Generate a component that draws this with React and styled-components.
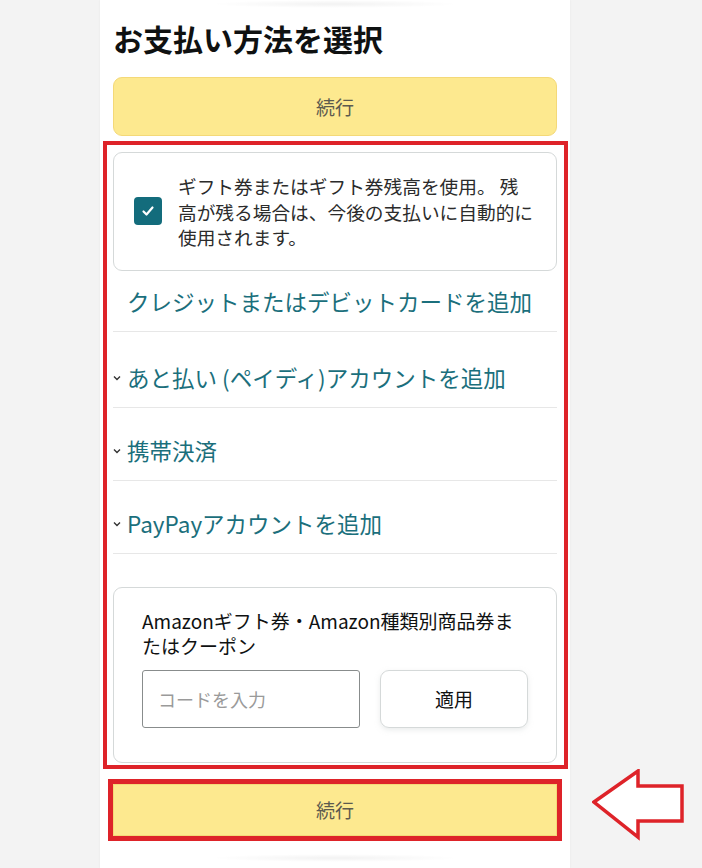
import React from 'react';
import styled, { createGlobalStyle } from 'styled-components';

const GlobalStyle = createGlobalStyle`
  body {
    margin: 0;
    background: #f3f3f3;
    font-family: "Noto Sans CJK JP", "Noto Sans", sans-serif;
    color: #0f1111;
  }
`;

const options = [
    { label: 'クレジットまたはデビットカードを追加', chevron: false, top: 17 },
    { label: 'あと払い (ペイディ)アカウントを追加', chevron: true, top: 32 },
    { label: '携帯決済', chevron: true, top: 29 },
    { label: 'PayPayアカウントを追加', chevron: true, top: 29 },
];

function Chevron() {
    return (
        <ChevronBox width="8" height="6" viewBox="0 0 8 6">
            <path d="M1 1.5 L4 4.5 L7 1.5" fill="none" stroke="#333" strokeWidth="1.4" />
        </ChevronBox>
    );
}

function Arrow() {
    return (
        <ArrowBox width="96" height="72" viewBox="0 0 96 72">
            <path
                d="M2 33 L46 2 L46 17 L90 17 L90 52 L46 52 L46 68 Z"
                fill="#fff"
                stroke="#de2329"
                strokeWidth="3.5"
                strokeLinejoin="miter"
            />
        </ArrowBox>
    );
}

function App() {
    return (
        <>
            <GlobalStyle />
            <Column>
                <Fade />
                <Title>お支払い方法を選択</Title>
                <ContinueButton>続行</ContinueButton>

                <Section>
                    <CheckCard>
                        <CheckBox>
                            <svg width="16" height="16" viewBox="0 0 16 16">
                                <path d="M3.5 8.5 L6.5 11.5 L12.5 4.5" fill="none" stroke="#fff" strokeWidth="2.2" strokeLinecap="round" strokeLinejoin="round" />
                            </svg>
                        </CheckBox>
                        <CheckText>
                            ギフト券またはギフト券残高を使用。 残<br />
                            高が残る場合は、今後の支払いに自動的に<br />
                            使用されます。
                        </CheckText>
                    </CheckCard>

                    {options.map((option, index) => (
                        <OptionRow key={index} $top={option.top}>
                            <ChevronSlot>{option.chevron && <Chevron />}</ChevronSlot>
                            <OptionLabel>{option.label}</OptionLabel>
                        </OptionRow>
                    ))}

                    <GiftCard>
                        <GiftText>
                            Amazonギフト券・Amazon種類別商品券ま<br />
                            たはクーポン
                        </GiftText>
                        <CodeRow>
                            <CodeInput placeholder="コードを入力" />
                            <ApplyButton>適用</ApplyButton>
                        </CodeRow>
                    </GiftCard>
                </Section>

                <BottomAction>
                    <ContinueButton $marked>続行</ContinueButton>
                    <Arrow />
                </BottomAction>
                <Fade $bottom />
            </Column>
        </>
    );
}

const Column = styled.div`
    width: 470px;
    min-height: 868px;
    margin-left: 100px;
    padding: 0 13px;
    box-sizing: border-box;
    background: #fff;
    box-shadow: 0 0 2px rgba(0, 0, 0, 0.06);
    display: flex;
    flex-direction: column;
`;

const Fade = styled.div`
    align-self: center;
    width: 250px;
    height: 8px;
    margin-top: ${p => (p.$bottom ? '18px' : '0')};
    background: radial-gradient(ellipse at center, rgba(0, 0, 0, 0.05), rgba(0, 0, 0, 0) 70%);
`;

const Title = styled.h1`
    margin: 12px 0 21px;
    font-size: 30px;
    line-height: 36px;
    font-weight: 700;
    color: #0f1111;
`;

const ContinueButton = styled.div`
    height: ${p => (p.$marked ? '52px' : '59px')};
    box-sizing: border-box;
    display: flex;
    align-items: center;
    justify-content: center;
    background: #fde98f;
    border: 1px solid #f4d978;
    border-radius: ${p => (p.$marked ? '0' : '9px')};
    outline: ${p => (p.$marked ? '5px solid #de2329' : 'none')};
    font-size: 19px;
    color: #5c5a4e;
`;

const Section = styled.div`
    position: relative;
    margin-top: 16px;
    display: flex;
    flex-direction: column;

    &::after {
        content: '';
        position: absolute;
        top: -11px;
        left: -10px;
        right: -11px;
        bottom: -6px;
        border: 4px solid #de2329;
        pointer-events: none;
    }
`;

const CheckCard = styled.div`
    display: flex;
    align-items: center;
    gap: 16px;
    padding: 20px 20px 20px 20px;
    border: 1px solid #d5d9d9;
    border-radius: 9px;
`;

const CheckBox = styled.div`
    flex: none;
    width: 28px;
    height: 28px;
    border-radius: 4px;
    background: #136c7c;
    display: flex;
    align-items: center;
    justify-content: center;
`;

const CheckText = styled.div`
    font-size: 18.7px;
    line-height: 25.5px;
    color: #2b2b2b;
    white-space: nowrap;
`;

const OptionRow = styled.div`
    display: flex;
    align-items: center;
    padding: ${p => p.$top}px 0 17px;
    border-bottom: 1px solid #e7e7e7;
`;

const ChevronSlot = styled.div`
    width: 14px;
    flex: none;
    display: flex;
    align-items: center;
    padding-top: 3px;
`;

const ChevronBox = styled.svg`
    display: block;
`;

const OptionLabel = styled.span`
    font-size: 22.5px;
    line-height: 26px;
    color: #1b6f7c;
    white-space: nowrap;
`;

const GiftCard = styled.div`
    margin-top: 33px;
    padding: 20px 28px 34px;
    border: 1px solid #d5d9d9;
    border-radius: 9px;
`;

const GiftText = styled.div`
    font-size: 19px;
    line-height: 25px;
    color: #0f1111;
    white-space: nowrap;
`;

const CodeRow = styled.div`
    display: flex;
    gap: 20px;
    margin-top: 12px;
`;

const CodeInput = styled.input`
    width: 218px;
    height: 58px;
    box-sizing: border-box;
    padding: 0 15px;
    border: 1px solid #888c8c;
    border-radius: 3px;
    font-family: inherit;
    font-size: 18px;
    color: #0f1111;

    &::placeholder {
        color: #9a9a9a;
    }
`;

const ApplyButton = styled.div`
    width: 148px;
    height: 58px;
    box-sizing: border-box;
    display: flex;
    align-items: center;
    justify-content: center;
    border: 1px solid #d5d9d9;
    border-radius: 9px;
    box-shadow: 0 2px 5px rgba(213, 217, 217, 0.5);
    font-size: 19px;
    color: #0f1111;
`;

const BottomAction = styled.div`
    position: relative;
    margin-top: 21px;
`;

const ArrowBox = styled.svg`
    position: absolute;
    left: calc(100% + 35px);
    top: -15px;
`;

export default App;
